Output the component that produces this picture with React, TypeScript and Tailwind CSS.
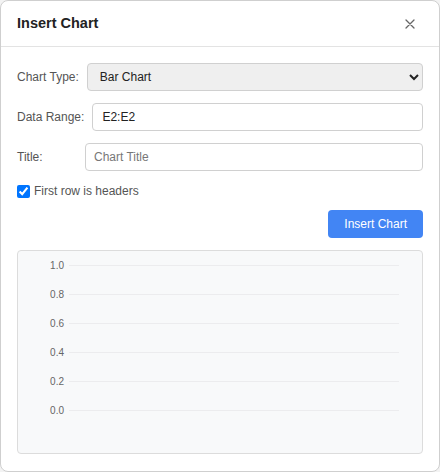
import { useState } from "react";

const ticks = ["1.0", "0.8", "0.6", "0.4", "0.2", "0.0"];

function EmptyChart() {
  return (
    <svg width="100%" height="202" className="block">
      {ticks.map((label, index) => {
        const y = 14.5 + index * 29;
        return (
          <g key={label}>
            <line x1="51" x2="381" y1={y} y2={y} stroke="#ececee" strokeWidth="1" />
            <text
              x="46"
              y={y + 3.5}
              textAnchor="end"
              fontSize="10"
              fill="#666666"
              fontFamily="'Liberation Sans', Arial, sans-serif"
            >
              {label}
            </text>
          </g>
        );
      })}
    </svg>
  );
}

export default function App() {
  const [chartType, setChartType] = useState("bar");
  const [range, setRange] = useState("E2:E2");
  const [title, setTitle] = useState("");
  const [headers, setHeaders] = useState(true);

  return (
    <div className="h-[472px] w-[440px] bg-[#f3f3f3] font-['Liberation_Sans',Arial,sans-serif]">
      <div className="flex h-full flex-col overflow-hidden rounded-lg border border-[#cfcfcf] bg-white">
        <div className="flex h-[46px] shrink-0 items-center justify-between border-b border-[#e3e3e3] pl-4 pr-[23px]">
          <h2 className="text-[14.5px] font-bold text-[#222]">Insert Chart</h2>
          <button aria-label="Close" className="flex h-3 w-3 items-center justify-center">
            <svg width="10" height="10" viewBox="0 0 10 10">
              <path d="M1 1L9 9M9 1L1 9" stroke="#666" strokeWidth="1.3" strokeLinecap="round" />
            </svg>
          </button>
        </div>

        <div className="flex flex-col px-4 pt-4">
          <div className="flex items-center gap-2">
            <label className="text-xs text-[#555]">Chart Type:</label>
            <select
              value={chartType}
              onChange={(event) => setChartType(event.target.value)}
              className="h-7 flex-1 rounded border border-[#d0d0d0] bg-[#efefef] px-2 text-xs text-[#222]"
            >
              <option value="bar">Bar Chart</option>
              <option value="line">Line Chart</option>
              <option value="pie">Pie Chart</option>
            </select>
          </div>

          <div className="mt-3 flex items-center gap-2">
            <label className="text-xs text-[#555]">Data Range:</label>
            <input
              value={range}
              onChange={(event) => setRange(event.target.value)}
              className="h-7 flex-1 rounded border border-[#d0d0d0] px-[9px] text-xs text-[#222]"
            />
          </div>

          <div className="mt-3 flex items-center gap-2">
            <label className="w-[60px] text-xs text-[#555]">Title:</label>
            <input
              value={title}
              placeholder="Chart Title"
              onChange={(event) => setTitle(event.target.value)}
              className="h-7 flex-1 rounded border border-[#d0d0d0] px-2 text-xs text-[#222] placeholder:text-[#777]"
            />
          </div>

          <label className="mt-3 flex items-center gap-1 text-xs text-[#555]">
            <input
              type="checkbox"
              checked={headers}
              onChange={(event) => setHeaders(event.target.checked)}
              className="h-[13px] w-[13px] accent-[#0075ff]"
            />
            First row is headers
          </label>

          <div className="mt-[11px] flex justify-end">
            <button className="h-7 rounded bg-[#4285f4] px-4 text-xs text-white">
              Insert Chart
            </button>
          </div>

          <div className="mt-3 h-[204px] rounded border border-[#dcdcdc] bg-[#f8f9fa]">
            <EmptyChart />
          </div>
        </div>
      </div>
    </div>
  );
}
